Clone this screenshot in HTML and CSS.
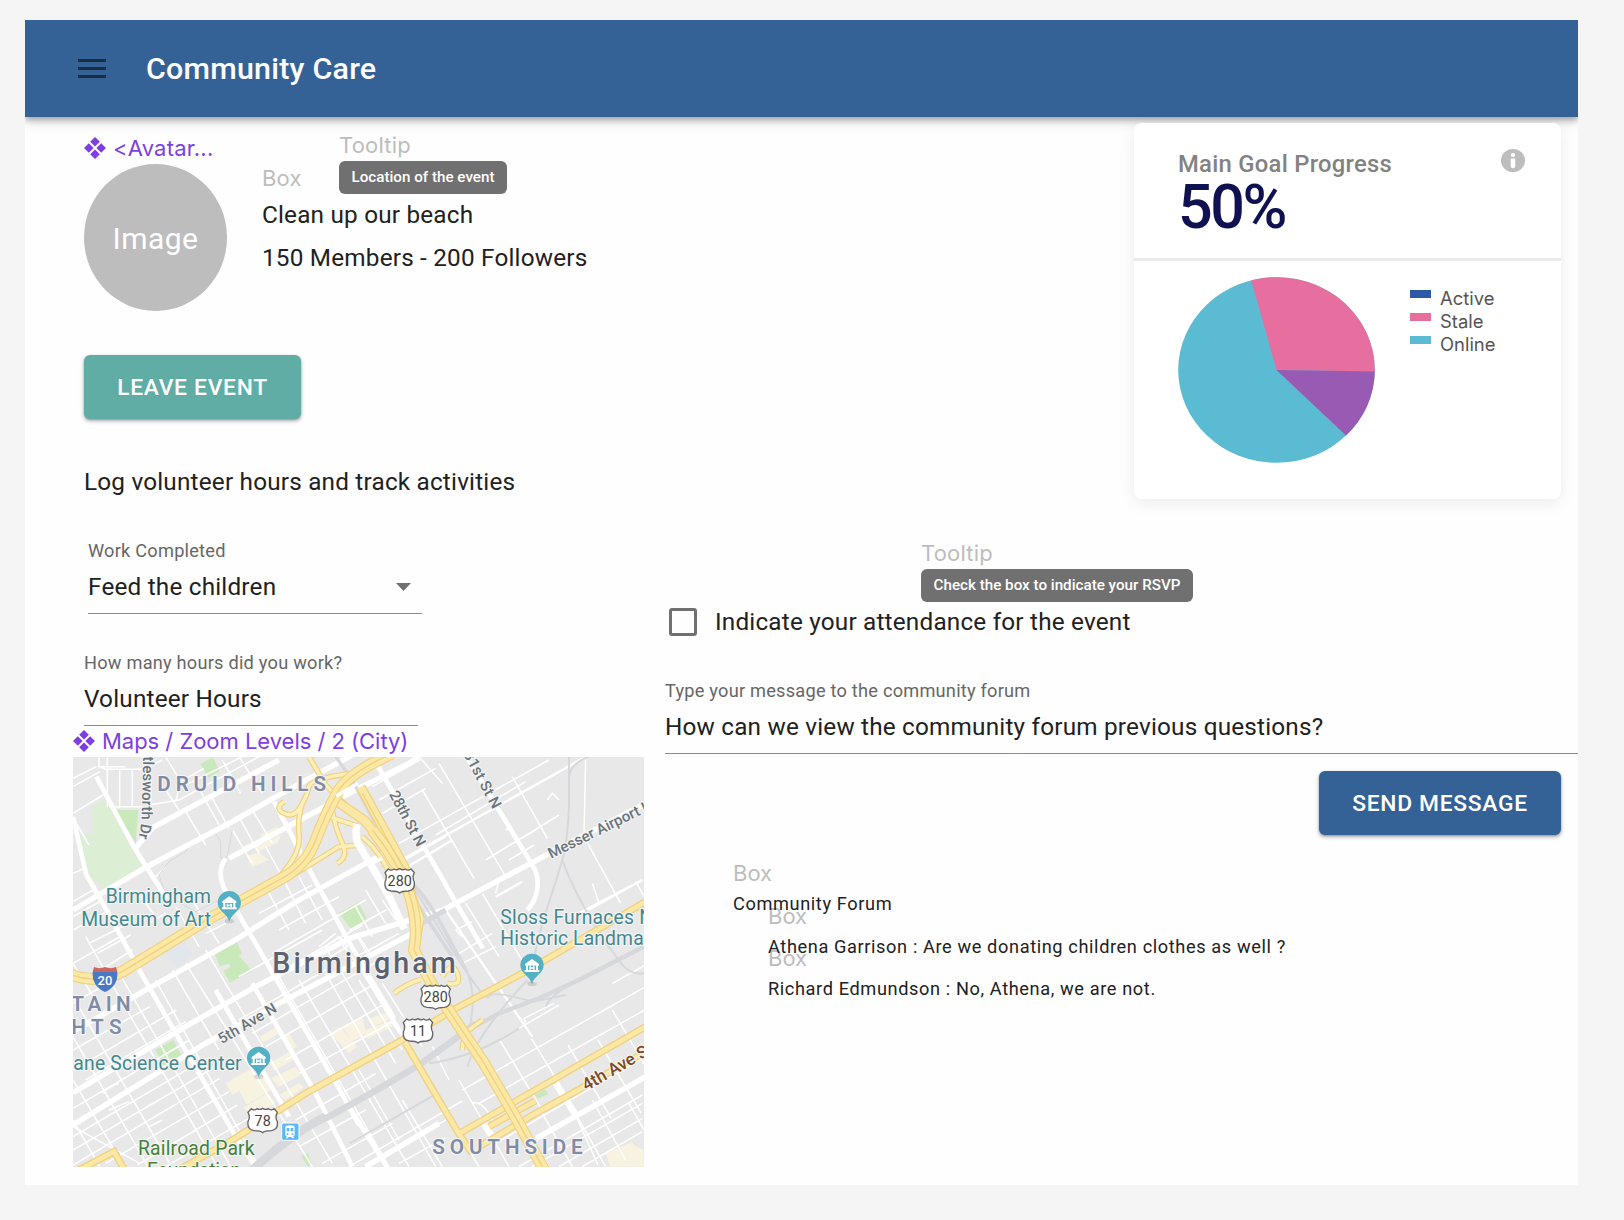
FILE: index.html
```html
<!DOCTYPE html>
<html lang="en">
<head>
<meta charset="utf-8">
<title>Community Care</title>
<link rel="stylesheet" href="styles.css">
</head>
<body>
<div class="app">
  <header class="bar">
    <svg class="menu" viewBox="0 0 28 19"><path d="M0 0h28v3H0zM0 8h28v3H0zM0 16h28v3H0z"/></svg>
    <h1 class="bar-title">Community Care</h1>
  </header>

  <div class="content">
    <main class="left">
      <div class="component"><svg class="diamonds" viewBox="0 0 22 22"><path d="M11 0l4.800 4.800L11 9.600 6.200 4.800zM4.800 6.200L9.600 11l-4.800 4.800L0 11zM17.200 6.200L22 11l-4.800 4.800-4.800-4.800zM11 12.400l4.800 4.800L11 22l-4.800-4.800z"/></svg><span class="avatar-name">&lt;Avatar...</span></div>
      <section class="event">
        <div class="avatar">Image</div>
        <div class="event-info">
          <span class="tag tag-box">Box</span>
          <span class="tag tag-tip">Tooltip</span>
          <span class="tip tip-location">Location of the event</span>
          <p class="body event-name">Clean up our beach</p>
          <p class="body event-members">150 Members - 200 Followers</p>
        </div>
      </section>
      <button class="btn btn-leave">LEAVE EVENT</button>
      <p class="body log">Log volunteer hours and track activities</p>
      <div class="field field-work">
        <label class="caption">Work Completed</label>
        <div class="value body"><span>Feed the children</span><svg class="caret" viewBox="0 0 15 8"><path d="M0 0h15L7.500 8z"/></svg></div>
      </div>
      <div class="field field-hours">
        <label class="caption">How many hours did you work?</label>
        <div class="value body"><span>Volunteer Hours</span></div>
      </div>
      <div class="component component-map"><svg class="diamonds" viewBox="0 0 22 22"><path d="M11 0l4.800 4.800L11 9.600 6.200 4.800zM4.800 6.200L9.600 11l-4.800 4.800L0 11zM17.200 6.200L22 11l-4.800 4.800-4.800-4.800zM11 12.400l4.800 4.800L11 22l-4.800-4.800z"/></svg><span class="map-name">Maps / Zoom Levels / 2 (City)</span></div>
      <svg class="map" viewBox="22 21 1713 1230" preserveAspectRatio="none">
        <defs>
          <g id="pin"><ellipse cx="0" cy="48" rx="14" ry="7" fill="#8a8a8a" opacity=".3"/><path d="M0 50C-6 24-35 18-35-7a35 35 0 0 1 70 0C35 18 6 24 0 50z" fill="#54b0c5"/><path d="M-21-11L0-26l21 15v5h-3V7h4v6h-44V7h4V-6h-3z" fill="#fff"/><path d="M-12-6h24V7h-24z" fill="#54b0c5"/><path d="M-8-4h5v3h6v-3h5V6H3V3h-6v3h-5z" fill="#fff"/></g>
          <path id="us" d="M-34-35q8 7 17 0 8 5 17-1 9 6 17 1 9 7 17 0l10 11q-8 14 0 28 3 24-18 27-20 0-26 6-6-6-26-6-21-3-18-27 8-14 0-28z" fill="#fff" stroke="#666" stroke-width="4"/>
          <path id="sworth" d="M235 -60L228 206Q224 245 207 308"/>
        </defs>
        <rect x="22" y="21" width="1713" height="1230" fill="#e8e8e8"/>
        <g class="park">
          <path d="M80 165l38-17 112 205-120 67-15-27-18 5-40-140 43-10z" fill="#dcefd5"/>
          <path d="M148 180h70l-8 100zM404 42l38-20 20 42-34 19zM820 490l58-34 25 50-44 35zM448 614l65-40 16 38-10 4 40 46-66 36-20-35 22-13-6-10-26 10zM268 900l55-30 28 54-52 28z"/>
          <path d="M1408 1035l30-17 10 14-32 14zM706 1218l20-8 12 30-10 10z"/>
          <path d="M296 604l55-35 32 45-50 40z" fill="#e1e7ec"/>
        </g>
        <g class="sand">
          <path d="M528 290l45-20 8 14-43 20zM583 254l52-24 4 12-50 24zM542 318l40-10 28 22-50 20zM566 292l80-36-10 22-60 28z"/>
          <path d="M480 1000l80-45 20 30-80 50zM515 1010l75-40 25 50-72 44zM530 1075l75-45 25 28-60 34zM612 940l60-35 14 22-60 36zM615 985l75-35 16 24-66 36zM640 1035l60-36 14 14-56 36zM582 860l50-28 10 18-50 28zM650 870l20-20 24 40-20 10zM794 850l30-20 50 60-24 20zM830 830l60-30 12 50-44 22zM852 850l40-20 8 24-40 20zM905 808l56-20 10 20-50 24zM900 840l80-30 6 16-80 40z"/>
          <path d="M1620 1210l70-30 44 20v50h-100zM1680 1185l20-10 8 14-20 10z"/>
        </g>
        <g class="minor">
          <path d="M22 85l70-35M22 110l80-45M22 190l90-55M22 370l35-15M100 20v30h80M125 20v150M162 60v115M200 60v110M255 60v110M125 58h125M100 50l25 10M130 170h100M250 165l90-15 240-130M290 30l-60 30M300 120l40 60M330 155l15-60 70-40M370 100l160-80M400 115l60 110M20 200l50 85M22 455l60-35M300 20l60 100M520 20l70 110M470 30l55 100M360 185l60 100M440 145l50 90M500 240l60 100M520 200l60 110M300 350l-30 30M560 180l60 100M600 290l60 110M22 500l80-45M22 540l110-60M70 580l100-50M95 610l100-55"/>
          <path d="M22 640l150-85M60 690l140-90M22 760l190-110M22 900l230-130M22 960l310-180M60 990l300-175M22 1075l350-205M22 1160l400-235M22 1200l420-245M22 1245l440-260M120 1240l370-215M215 1245l300-180M300 1250l250-145M270 500l-60-80M330 470l70 120M380 450l80 130M420 550l60-30M250 520l50-30M660 400l60 120M700 380l70 130M610 430l60 110M640 540l180-100M580 490l160-85M520 680l250-140M600 690l290-165M620 610l280-160M760 590l50-40M820 570l60 80M870 550l40 70"/>
          <path d="M60 560l65 115M22 640l60 100M22 740l290 500M22 860l225 390M22 990l150 255M22 1110l80 140M120 670l335 580M155 660l340 590M270 690l310 560M320 660l140 240M360 640l380 610M420 600l380 640M22 1130l200 110M110 1030q20-20 50-30M130 1080l60-25M230 1100l20 30 40-20"/>
          <path d="M520 810l260-150M560 850l400-230M600 890l330-190M660 930l300-170M700 970l290-160M690 1110l240-139M700 1190l200-110M770 1240l210-120M850 1250l340-197M900 1250l240-140M1000 1240l140-77M640 680l330 570M700 690l330 560M780 670l330 580M830 670l160 270M880 690l130 210M950 700l120 190M880 960l120 210M1010 1050l120 200M1120 1050l120 200M1180 990l150 260"/>
          <path d="M940 150l170-95M1060 20l70 80M920 110l125-70M950 190l130-75M1000 340l140-80M1060 300l130-70M1050 20l-30 20M1070 120l155 265M1120 40l200 340M1000 280l450-250M1110 255l270-160M1445 150l15-20 20 20M1340 80l105 185M1260 330l220-135M1320 240l20-10M1290 310l120-70M1300 170l-40 20M1330 330l75-45M1250 430l160 270M1300 390l-10 40M1560 20l-5 240 110 200M1570 480l160-90M1580 400l20 60M1710 395l40 70M1170 540l50-25M1170 540l20 20M1180 610l100-60M1200 460l100 160M1190 640l100-50"/>
          <path d="M1150 990l-50-100M1302 870l130 215M1397 865l110 180 90 200M1300 870l180-105M1380 820l-5-15 90-45M1507 885l130 220M1597 870l130 220M1640 780l100 170M1190 1020l550-310M1240 1060l500-282M1270 1100l120-70M1290 1180l440-255M1360 1250l370-215M1400 1250l330-190M1480 1250l250-145M1550 1250l180-105M1500 1040l120 210M1580 1050l100 180M1430 1090l90 160M1370 1120l80 130M1690 1060l45 80M1280 1110q-30-60-60-50M1640 700l100-55"/>
          <path d="M500 240l-15 80-20 5v-50l-20-30-70 30-15 30-50 30-30 40 20 60 90 50 80-40" class="outline"/>
          <path d="M780 590l40-30 25 30-50 30zM870 470l50 90M900 420l60 100M852 540l110-60M910 600l90-50M870 620l80-40M880 560l40 60M950 450l40 60"/>
        </g>
        <g class="streets">
          <path d="M205 300L262 232 640 30M22 480L240 352 500 215 640 135 860 15M490 325L700 212 860 125 1060 25M22 845L240 720 500 575 700 450 900 340 980 300M22 1028L380 818 570 710 852 565 1132 480 1470 300 1740 160M22 1125L420 880 640 760 1040 550M1412 1165L1740 980M900 1250L1120 1120" stroke-width="16"/>
          <path d="M22 200l40 175 50 85 120 220 110 190 160 275 70 110M92 80l115 215 95 150M480 325q-30 40 0 100l110 190 230 400 60 110M625 155l120 230 110 200 130 220M560 700l190 330 110 220M880 640l150 250M932 40l240 420 80 135M1190 0l210 345q20 30 15 70t-30 65M450 720l220 380M850 1070l120 190" stroke-width="14"/>
          <path d="M1470 1000l60 95M1250 1110l40 70" stroke-width="20"/>
          <path d="M990 340l580-325M1290 440l80-45M1010 360l150-90M1520 500l210-110M1140 480l260 380" stroke-width="7"/>
        </g>
        <g class="rail">
          <path d="M560 1260Q680 1150 780 1100" stroke-width="26"/>
          <path d="M780 1105L930 1022 1060 945 1150 880 1230 820" stroke-width="20"/>
          <path d="M1200 845L1300 790 1420 745 1540 690 1734 590" stroke-width="13"/>
          <path d="M862 95L980 310Q1060 440 1160 600T1270 740 1400 755L1500 735M1510 20v150Q1505 280 1490 330T1430 520L1405 620M1570 20q-60 20-60 70M1490 330q20 60 70 150t85 130q40 70 90 60M1205 950q30-100 180-260M1090 940Q1230 920 1360 835M1170 600q60 90 50 180t-30 120M1440 770q20-50 160-110" stroke-width="6"/>
          <path d="M810 20l50 70 120 230" stroke-width="10"/>
          <path d="M1045 405Q1100 460 1180 625M1060 470l100 150" stroke-width="11"/>
          <path d="M852 1180L1115 1030" stroke-width="6"/><path d="M1050 530l90-50" stroke-width="16"/>
        </g>
        <g class="roads">
          <path class="edge" d="M330 1265L500 1170 720 1030 1010 870 1180 770 1370 670 1740 455M1020 880L1090 1000 1182 1155 1220 1210M1182 1150L1470 985 1740 830M1240 1190L1410 1090 1520 1030 1740 905M1270 1130l140-78M40 1260l105-55 35 60" stroke-width="22"/>
          <path class="core" d="M330 1265L500 1170 720 1030 1010 870 1180 770 1370 670 1740 455M1020 880L1090 1000 1182 1155 1220 1210M1182 1150L1470 985 1740 830M1240 1190L1410 1090 1520 1030 1740 905M1270 1130l140-78M40 1260l105-55 35 60" stroke-width="14"/>
          <path class="edge" d="M655 155q-30 20 0 35t50-20 25-60 130-40M710 160q-15 50-10 90t-20 80-50 60M800 180q10 60 30 100t-15 60M650 395l170-105 70-5M790 200l90 30M890 260q60 50 90 130M730 20l50 85 120 120M1190 900q0-30 20-60l40-30M1130 680q30-50 45-10t-30 30M985 730q30-25 80-42" stroke-width="17"/>
          <path class="ramp" d="M655 155q-30 20 0 35t50-20 25-60 130-40M710 160q-15 50-10 90t-20 80-50 60M800 180q10 60 30 100t-15 60M650 395l170-105 70-5M790 200l90 30M890 260q60 50 90 130M730 20l50 85 120 120M1190 900q0-30 20-60l40-30M1130 680q30-50 45-10t-30 30M985 730q30-25 80-42" stroke-width="10"/>
          <path d="M874 222q-10 45 10 70l45 75 43 75 44 95" stroke="#fff" stroke-width="22"/>
          <path class="edge" d="M1046 440l24 65-12 70" stroke-width="14"/><path class="ramp" d="M1046 440l24 65-12 70" stroke-width="7"/>
          <path class="edge" d="M885 111L962 251 1016 351 1043 461M809 151L896 211Q990 320 1032 430" stroke-width="30"/>
          <path class="core" d="M885 111L962 251 1016 351 1043 461M809 151L896 211Q990 320 1032 430" stroke-width="23"/>
          <path class="edge" d="M10 672Q90 705 170 665L420 512 640 390Q720 350 750 270T820 120Q850 70 980 10M920 240Q1000 340 1030 430T1045 600L1103 711 1169 811 1256 941 1355 1111 1436 1261" stroke-width="36"/>
          <path class="core" d="M10 672Q90 705 170 665L420 512 640 390Q720 350 750 270T820 120Q850 70 980 10M920 240Q1000 340 1030 430T1045 600L1103 711 1169 811 1256 941 1355 1111 1436 1261" stroke-width="29"/>
          <path class="edge" d="M10 672Q90 705 170 665L420 512 640 390Q720 350 750 270T820 120Q850 70 980 10M920 240Q1000 340 1030 430T1045 600L1103 711 1169 811 1256 941 1355 1111 1436 1261M890 130L962 262 1016 360" stroke-width="4"/>
        </g>
        <path d="M812 138l65-38M950 325l-30 15" fill="none" stroke="#fff" stroke-width="10"/>
        <g class="labels">
          <text class="area" x="275" y="123" font-size="62" textLength="506">DRUID HILLS</text>
          <text class="area" x="17" y="783" font-size="62" textLength="178">TAIN</text>
          <text class="area" x="17" y="852" font-size="62" textLength="151">HTS</text>
          <text class="area" x="1100" y="1213" font-size="62" textLength="451">SOUTHSIDE</text>
          <text class="city" x="620" y="668" font-size="86" textLength="550">Birmingham</text>
          <text class="road" font-size="45"><textPath href="#sworth" startOffset="64">ttlesworth Dr</textPath></text>
          <text class="road" font-size="45" transform="translate(969 132) rotate(62)" textLength="182">28th St N</text>
          <text class="road" font-size="45" transform="translate(1193 13) rotate(62)" textLength="188">31st St N</text>
          <text class="road" font-size="45" transform="translate(1456 326) rotate(-26)">Messer Airport Hwy</text>
          <text class="road" font-size="45" transform="translate(468 883) rotate(-30.500)" textLength="196">5th Ave N</text>
          <text class="road brown" font-size="52" transform="translate(1562 1024) rotate(-30)">4th Ave S</text>
          <text class="place" x="120" y="460" font-size="58" textLength="316">Birmingham</text>
          <text class="place" x="47" y="527" font-size="58" textLength="389">Museum of Art</text>
          <text class="place" x="1304" y="521" font-size="58" textLength="458">Sloss Furnaces N</text>
          <text class="place" x="1304" y="586" font-size="58" textLength="430">Historic Landma</text>
          <text class="place" x="23" y="959" font-size="58" textLength="505">ane Science Center</text>
          <text class="green" x="217" y="1216" font-size="58" textLength="350">Railroad Park</text>
          <text class="green" x="244" y="1281" font-size="58" textLength="282">Foundation</text>
        </g>
        <use href="#pin" x="491" y="465"/><use href="#pin" x="1399" y="653"/><use href="#pin" x="579" y="932"/>
        <use href="#us" x="1002" y="392"/><use href="#us" x="1110" y="741"/><use href="#us" x="1057" y="842"/><use href="#us" x="591" y="1111"/>
        <g class="nums" font-size="43"><text x="1002" y="409">280</text><text x="1110" y="757">280</text><text x="1057" y="858">11</text><text x="591" y="1128">78</text></g>
        <path d="M81 666h74q3 42-37 60-40-18-37-60z" fill="#4b78c2"/><path d="M85 651q16 7 33 0 17 7 33 0l4 15H81z" fill="#cc6661"/>
        <text x="118" y="706" font-size="39" text-anchor="middle" fill="#fff" font-weight="500">20</text>
        <rect x="648" y="1119" width="52" height="52" rx="6" fill="#5db8f7" stroke="#fff" stroke-width="3"/>
        <path d="M659 1132q0-6 14-6t14 6v22q0 5-5 6l4 5h-6l-3-4h-8l-3 4h-6l4-5q-5-1-5-6z" fill="#fff"/><path d="M663 1134h8v10h-8zM675 1134h8v10h-8zM663 1150h5v5h-5zM678 1150h5v5h-5z" fill="#5db8f7"/>
      </svg>
    </main>

    <aside class="right">
      <section class="card">
        <div class="card-head">
          <div>
            <h2 class="card-title">Main Goal Progress</h2>
            <div class="percent">50%</div>
          </div>
          <svg class="info" viewBox="0 0 24 23"><ellipse cx="12" cy="11.500" rx="12" ry="11.500" fill="#bdbdbd"/><ellipse cx="12" cy="6" rx="2.300" ry="2" fill="#fff"/><path d="M9.700 9.500h4.600V17a2.300 2.200 0 0 1-4.600 0z" fill="#fff"/></svg>
        </div>
        <div class="card-body">
          <svg class="pie" viewBox="0 0 197 186"><ellipse cx="98.500" cy="93" rx="98.300" ry="92.800" fill="#5abbd3"/><path d="M98.500 93L73.200 3.300A98.300 92.800 0 0 1 196.800 94.500z" fill="#e66fa0"/><path d="M98.500 93l98.300 1.500A98.300 92.800 0 0 1 168 158.500z" fill="#985ab2"/></svg>
          <ul class="legend">
            <li><i class="swatch active"></i>Active</li>
            <li><i class="swatch stale"></i>Stale</li>
            <li><i class="swatch online"></i>Online</li>
          </ul>
        </div>
      </section>

      <div class="rsvp">
        <span class="tag tag-rsvp">Tooltip</span>
        <span class="tip tip-rsvp">Check the box to indicate your RSVP</span>
        <span class="check"></span>
        <span class="body rsvp-text">Indicate your attendance for the event</span>
      </div>
      <div class="field field-message">
        <label class="caption">Type your message to the community forum</label>
        <div class="value body"><span>How can we view the community forum previous questions?</span></div>
      </div>
      <button class="btn btn-send">SEND MESSAGE</button>
      <section class="forum">
        <p class="post root"><span class="tag tag-post">Box</span><span class="post-text">Community Forum</span></p>
        <p class="post"><span class="tag tag-post">Box</span><span class="post-text">Athena Garrison : Are we donating children clothes as well ?</span></p>
        <p class="post"><span class="tag tag-post">Box</span><span class="post-text">Richard Edmundson : No, Athena, we are not.</span></p>
      </section>
    </aside>
  </div>
</div>
</body>
</html>
```
FILE: styles.css
```css
* { box-sizing: border-box; }
body { margin: 0; padding: 20px 46px 35px 25px; height: 1220px; background: #f5f5f5; font-family: Roboto, "Liberation Sans", sans-serif; color: #212121; overflow: hidden; }
h1, h2, p, ul { margin: 0; padding: 0; font-weight: inherit; }
.app { width: 1553px; height: 1165px; background: #fefefe; overflow: hidden; }
.bar { position: relative; height: 97px; background: #346296; display: flex; align-items: center; padding: 1px 0 0 53px; gap: 40px; box-shadow: 0 3px 6px rgba(0,0,0,.3), 0 6px 12px rgba(0,0,0,.1); }
.menu { width: 28px; height: 19px; fill: #1a2b42; margin-bottom: 1px; }
.bar-title { font-size: 30.400px; line-height: 40px; font-weight: 500; color: #fff; letter-spacing: .23px; white-space: nowrap; }
.content { display: flex; }
.left { width: 640px; flex: none; display: flex; flex-direction: column; align-items: flex-start; padding: 16px 0 0 59px; }
.component { display: flex; align-items: center; gap: 7px; height: 31px; padding-bottom: 1px; font: 22px/28px Inter, sans-serif; color: #7b3fe4; white-space: nowrap; }
.avatar-name { letter-spacing: .2px; }
.map-name { letter-spacing: -.03px; }
.diamonds { width: 22px; height: 22px; fill: #7b3fe4; flex: none; }
.event { display: flex; height: 147px; gap: 35px; }
.avatar { width: 143px; height: 147px; border-radius: 50%; background: #bdbdbd; color: #fff; font-size: 30px; letter-spacing: .5px; display: flex; align-items: center; justify-content: center; padding-top: 1px; }
.event-info { position: relative; padding-top: 30px; }
.body { font-size: 24.300px; line-height: 42px; letter-spacing: .2px; white-space: nowrap; }
.event-members { margin-top: 1px; }
.tag { position: absolute; font: 22px/28px Inter, sans-serif; letter-spacing: .2px; color: #bdbdbd; }
.tag-box { left: 0; top: 0; }
.tag-tip { left: 77px; top: -33px; }
.tip { position: absolute; height: 33px; border-radius: 6px; background: #707070; color: #fff; font-size: 15.200px; line-height: 32px; font-weight: 500; white-space: nowrap; text-align: center; }
.tip-location { left: 77px; top: -3px; width: 168px; }
.btn { border: 0; border-radius: 6px; height: 64px; padding: 0; color: #fff; font: 500 22.800px Roboto, sans-serif; letter-spacing: .7px; box-shadow: 0 2px 4px rgba(0,0,0,.3), 0 1px 2px rgba(0,0,0,.2); white-space: nowrap; }
.btn-leave { margin-top: 44px; width: 217px; background: #5fada5; }
.log { margin-top: 42px; }
.field { display: flex; flex-direction: column; border-bottom: 1.500px solid #8c8c8c; width: 334px; }
.caption { font-size: 18.200px; line-height: 24px; letter-spacing: .23px; color: #666; white-space: nowrap; }
.value { display: flex; justify-content: space-between; align-items: center; height: 42px; line-height: 42px; padding-right: 11px; }
.caret { width: 15px; height: 8px; fill: #707070; }
.field-work { margin: 36px 0 0 4px; height: 75px; gap: 3px; }
.field-hours { margin-top: 37px; height: 75px; gap: 3px; }
.component-map { margin: 0 0 0 -11px; }
.map { width: 571px; height: 410px; margin-left: -11px; display: block; }
.park { fill: #cae9ba; }
.sand { fill: #f8f2e1; }
.rail, .minor, .streets, .roads { fill: none; }
.rail { stroke: #d6d8dc; }
.minor { stroke: #fff; stroke-width: 4.500px; }
.outline { stroke: #d9d9d9; stroke-width: 3px; }
.streets { stroke: #fff; }
.edge { stroke: #f0d17d; }
.core { stroke: #fbe8a6; }
.ramp { stroke: #fdefba; }
.labels text { paint-order: stroke; stroke: #f4f4f4; stroke-width: 7px; stroke-linejoin: round; }
.area { fill: #808ba6; font-weight: 600; }
.city { fill: #5b6170; font-weight: 500; }
.road { fill: #68737a; font-weight: 500; }
.road.brown { fill: #7c4a1e; }
.place { fill: #43888e; }
.green { fill: #458139; }
.nums { fill: #444; text-anchor: middle; }
.right { width: 913px; flex: none; display: flex; flex-direction: column; padding-top: 6px; }
.card { position: relative; align-self: flex-end; width: 427px; height: 376px; margin-right: 17px; border-radius: 8px; background: #fff; box-shadow: 0 4px 16px rgba(0,0,0,.08); }
.card-head { display: flex; justify-content: space-between; height: 138px; padding: 25px 36px 0 44px; border-bottom: 3px solid #ebebeb; }
.card-title { font-size: 23.800px; line-height: 32px; font-weight: 500; letter-spacing: .28px; color: #828282; white-space: nowrap; }
.percent { font-size: 61px; line-height: 54px; font-weight: 500; letter-spacing: -2.400px; color: #0f1150; }
.info { width: 24px; height: 23px; margin-top: 1px; }
.card-body { display: flex; gap: 35px; padding: 16px 0 0 44px; }
.pie { width: 197px; height: 186px; }
.legend { list-style: none; padding-top: 10px; font: 18.400px/23px Inter, sans-serif; color: #555; }
.legend li { display: flex; gap: 9px; }
.swatch { width: 21px; height: 8px; margin-top: 3px; }
.active { background: #2c5aa6; }
.stale { background: #e66fa0; }
.online { background: #5abbd3; }
.rsvp { position: relative; display: flex; align-items: center; height: 42px; margin-top: 101px; padding-left: 4px; gap: 19px; }
.check { width: 28px; height: 28px; border: 3px solid #707070; border-radius: 3px; margin-top: 1px; }
.rsvp-text { padding-top: 1px; margin-left: -1px; }
.tag-rsvp { left: 256px; top: -61px; }
.tip-rsvp { left: 256px; top: -31px; width: 272px; }
.field-message { width: 913px; margin-top: 37px; height: 75px; gap: 3px; }
.btn-send { align-self: flex-end; width: 242px; margin: 17px 17px 0 0; background: #346296; }
.forum { padding: 25px 0 0 68px; }
.post { position: relative; height: 42.500px; padding: 32px 0 0 35px; font-size: 18.200px; line-height: 24px; letter-spacing: .61px; white-space: nowrap; }
.post.root { padding-left: 0; }
.post-text { position: relative; z-index: 1; }
.tag-post { left: 35px; top: -1px; letter-spacing: 0; }
.root .tag-post { left: 0; }
```
